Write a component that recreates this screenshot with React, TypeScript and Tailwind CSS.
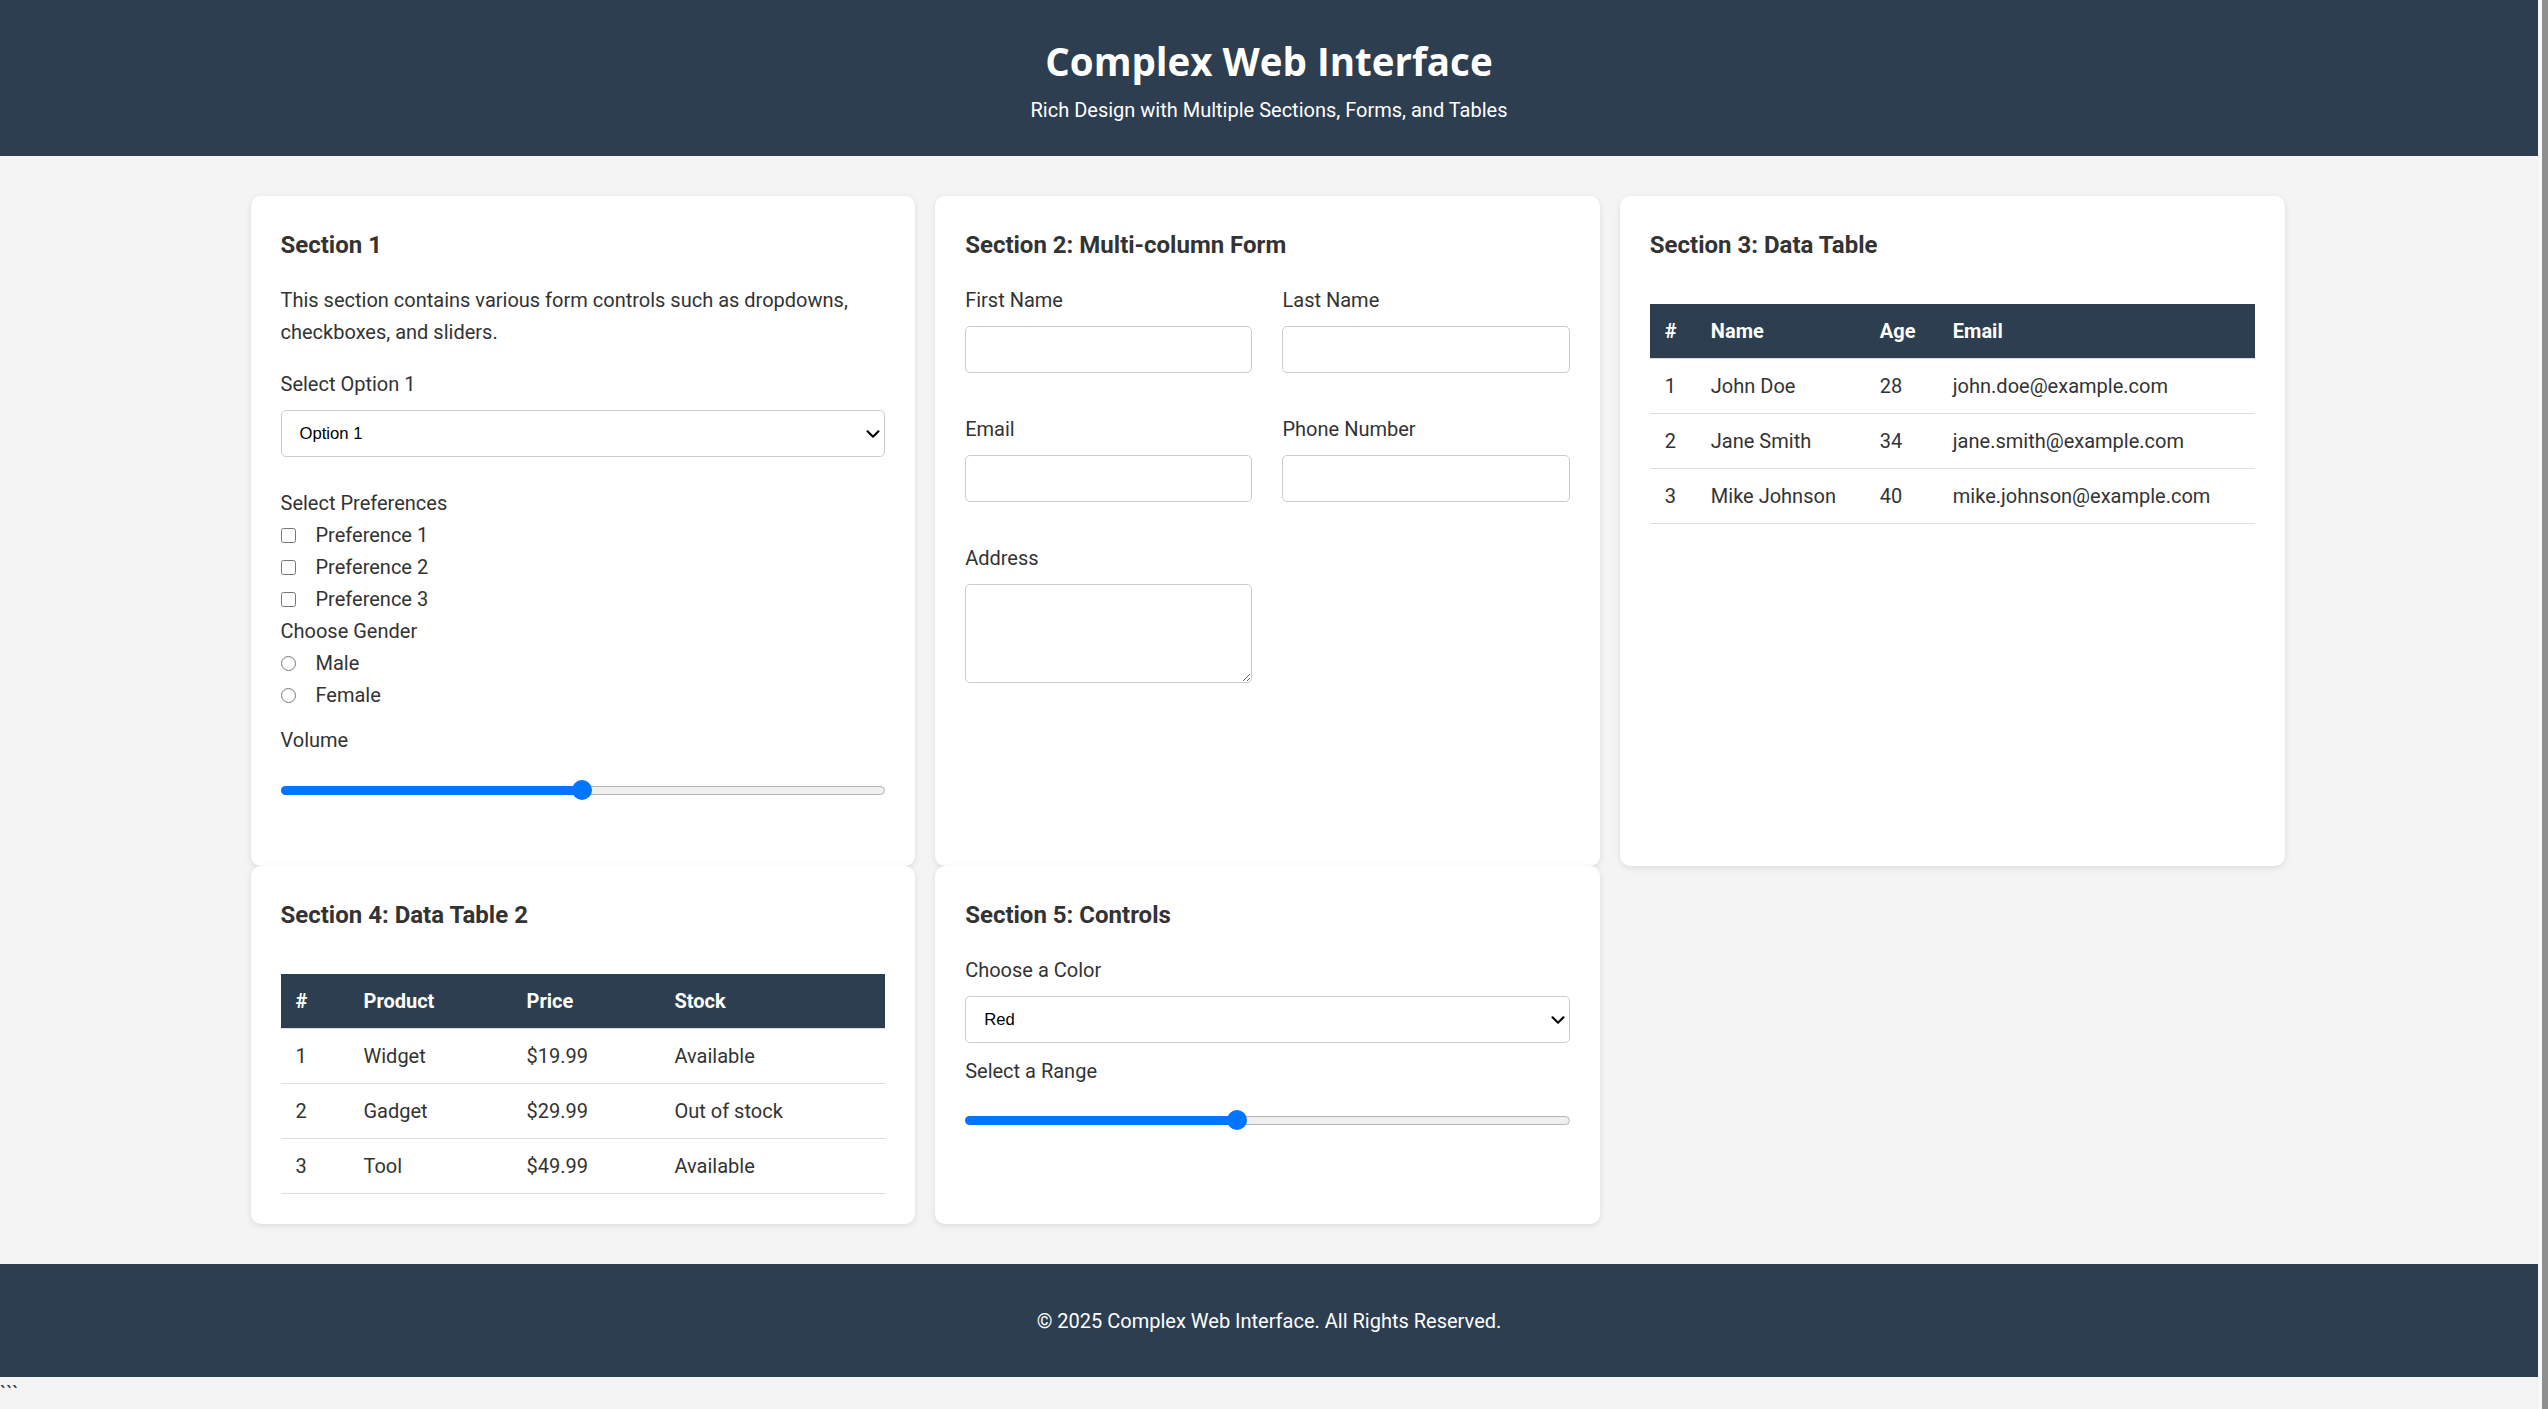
import { ChevronDown } from 'lucide-react';

interface Column {
  label: string;
  width: string;
}

interface DataTableProps {
  columns: Column[];
  rows: string[][];
}

function DataTable({ columns, rows }: DataTableProps) {
  return (
    <div className="pt-[20px]">
      <table className="w-full table-fixed border-collapse text-left text-[20px]">
        <thead>
          <tr className="bg-[#2c3e50] text-white">
            {columns.map((col) => (
              <th
                key={col.label}
                className={`${col.width} border-b border-[#ddd] px-[15px] py-[11px] font-bold leading-[32px]`}
              >
                {col.label}
              </th>
            ))}
          </tr>
        </thead>
        <tbody>
          {rows.map((row) => (
            <tr key={row[0]}>
              {row.map((cell, i) => (
                <td key={i} className="border-b border-[#ddd] px-[15px] py-[11px] leading-[32px]">
                  {cell}
                </td>
              ))}
            </tr>
          ))}
        </tbody>
      </table>
    </div>
  );
}

function Select({ value }: { value: string }) {
  return (
    <div className="relative">
      <select
        defaultValue={value}
        className="block h-[47px] w-full appearance-none rounded-[5px] border border-[#ccc] bg-white pl-[18px] font-['Liberation_Sans',Arial,sans-serif] text-[16.67px] text-black outline-none"
      >
        <option>{value}</option>
      </select>
      <ChevronDown
        size={22}
        strokeWidth={2.3}
        className="pointer-events-none absolute right-[1px] top-1/2 -translate-y-1/2 text-black"
      />
    </div>
  );
}

// fake range input, thumb sits where the fill ends
function Slider({ fill }: { fill: string }) {
  return (
    <div className="flex h-[20px] items-center">
      <div className={`${fill} h-[9px] shrink-0 rounded-l-full bg-[#0075ff]`} />
      <div className="relative z-10 -mx-[10px] h-[20px] w-[20px] shrink-0 rounded-full bg-[#0075ff]" />
      <div className="h-[9px] flex-1 rounded-r-full border border-[#b5b5b5] bg-[#efefef]" />
    </div>
  );
}

function Card({ title, children }: { title: string; children: React.ReactNode }) {
  return (
    <section className="rounded-[10px] bg-white p-[30px] shadow-[0_2px_6px_rgba(0,0,0,0.1)]">
      <h2 className="mb-[20px] text-[24px] font-bold leading-[38px] text-[#333]">{title}</h2>
      {children}
    </section>
  );
}

const Label = ({ children }: { children: React.ReactNode }) => (
  <label className="block leading-[32px]">{children}</label>
);

function TextInput() {
  return <input type="text" className="mt-[10px] block h-[47px] w-full rounded-[5px] border border-[#ccc] bg-white" />;
}

export default function App() {
  return (
    <div className="flex min-h-screen bg-[#f4f4f4] font-['Roboto',sans-serif] text-[20px] text-[#333]">
      <div className="min-w-0 flex-1">
        <header className="bg-[#2c3e50] pb-[30px] pt-[37px] text-center text-white">
          <h1 className="mb-[9px] font-['Open_Sans',sans-serif] text-[38.5px] font-bold leading-[48px]">
            Complex Web Interface
          </h1>
          <p className="leading-[32px]">Rich Design with Multiple Sections, Forms, and Tables</p>
        </header>

        <main className="py-[40px] pr-[3px]">
          <div className="mx-auto grid w-[2034px] grid-cols-3 gap-x-[20px]">
            <Card title="Section 1">
              <p className="mb-[20px] leading-[32px]">
                This section contains various form controls such as dropdowns, checkboxes, and sliders.
              </p>
              <Label>Select Option 1</Label>
              <div className="mb-[30px] mt-[10px]">
                <Select value="Option 1" />
              </div>
              <Label>Select Preferences</Label>
              {['Preference 1', 'Preference 2', 'Preference 3'].map((p) => (
                <div key={p} className="flex h-[32px] items-center">
                  <input type="checkbox" className="m-0 mr-[20px] h-[15px] w-[15px]" />
                  <span>{p}</span>
                </div>
              ))}
              <Label>Choose Gender</Label>
              {['Male', 'Female'].map((g) => (
                <div key={g} className="flex h-[32px] items-center">
                  <input type="radio" name="gender" className="m-0 mr-[20px] h-[15px] w-[15px]" />
                  <span>{g}</span>
                </div>
              ))}
              <div className="mt-[13px]">
                <Label>Volume</Label>
              </div>
              <div className="mb-[36px] mt-[24px]">
                <Slider fill="w-[301px]" />
              </div>
            </Card>

            <Card title="Section 2: Multi-column Form">
              <div className="grid grid-cols-2 gap-x-[30px] gap-y-[40px]">
                <div>
                  <Label>First Name</Label>
                  <TextInput />
                </div>
                <div>
                  <Label>Last Name</Label>
                  <TextInput />
                </div>
                <div>
                  <Label>Email</Label>
                  <TextInput />
                </div>
                <div>
                  <Label>Phone Number</Label>
                  <TextInput />
                </div>
                <div>
                  <Label>Address</Label>
                  <textarea className="mt-[10px] block h-[99px] w-full resize rounded-[5px] border border-[#ccc] bg-white" />
                </div>
              </div>
            </Card>

            <Card title="Section 3: Data Table">
              <DataTable
                columns={[
                  { label: '#', width: 'w-[46px]' },
                  { label: 'Name', width: 'w-[169px]' },
                  { label: 'Age', width: 'w-[73px]' },
                  { label: 'Email', width: 'w-auto' },
                ]}
                rows={[
                  ['1', 'John Doe', '28', 'john.doe@example.com'],
                  ['2', 'Jane Smith', '34', 'jane.smith@example.com'],
                  ['3', 'Mike Johnson', '40', 'mike.johnson@example.com'],
                ]}
              />
            </Card>

            <Card title="Section 4: Data Table 2">
              <DataTable
                columns={[
                  { label: '#', width: 'w-[68px]' },
                  { label: 'Product', width: 'w-[163px]' },
                  { label: 'Price', width: 'w-[148px]' },
                  { label: 'Stock', width: 'w-auto' },
                ]}
                rows={[
                  ['1', 'Widget', '$19.99', 'Available'],
                  ['2', 'Gadget', '$29.99', 'Out of stock'],
                  ['3', 'Tool', '$49.99', 'Available'],
                ]}
              />
            </Card>

            <Card title="Section 5: Controls">
              <Label>Choose a Color</Label>
              <div className="mb-[12px] mt-[10px]">
                <Select value="Red" />
              </div>
              <Label>Select a Range</Label>
              <div className="mt-[23px]">
                <Slider fill="w-[272px]" />
              </div>
            </Card>
          </div>
        </main>

        <footer className="flex h-[113px] items-center justify-center bg-[#2c3e50] text-white">
          <p className="leading-[32px]">© 2025 Complex Web Interface. All Rights Reserved.</p>
        </footer>
        <div className="leading-[32px]">```</div>
      </div>
      {/* browser scrollbar strip seen at the right edge of the shot */}
      <div className="w-[10px] shrink-0 border-l-[4px] border-[#f8f8f8] bg-[#8f8f8f]" />
    </div>
  );
}
